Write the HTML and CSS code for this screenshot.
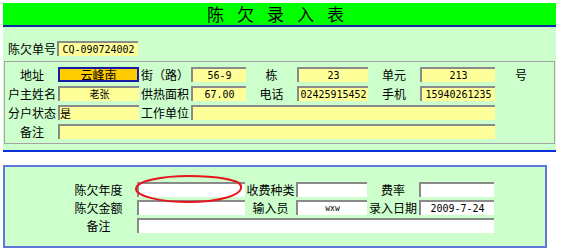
FILE: index.html
```html
<!DOCTYPE html>
<html>
<head>
    <meta charset="utf-8">
    <title>陈欠录入表</title>
    <link rel="stylesheet" href="styles.css">
</head>
<body>
    <div class="sheet">
        <div class="title">陈欠录入表</div>

        <div class="bill">
            <span class="bill-label">陈欠单号</span>
            <div class="field bill-no">CQ-090724002</div>
        </div>

        <div class="info">
            <span class="lbl">地址</span>
            <div class="field hot">云峰南</div>
            <span class="lbl">街（路）</span>
            <div class="field">56-9</div>
            <span class="lbl">栋</span>
            <div class="field">23</div>
            <span class="lbl">单元</span>
            <div class="field">213</div>
            <span class="lbl">号</span>

            <span class="lbl first">户主姓名</span>
            <div class="field">老张</div>
            <span class="lbl">供热面积</span>
            <div class="field">67.00</div>
            <span class="lbl">电话</span>
            <div class="field">02425915452</div>
            <span class="lbl">手机</span>
            <div class="field">15940261235</div>

            <span class="lbl first">分户状态</span>
            <div class="field left">是</div>
            <span class="lbl">工作单位</span>
            <div class="field span5"></div>

            <span class="lbl first">备注</span>
            <div class="field span7"></div>
        </div>
    </div>

    <div class="arrears">
        <div class="arrears-grid">
            <span class="lbl">陈欠年度</span>
            <div class="field white"></div>
            <span class="lbl">收费种类</span>
            <div class="field white"></div>
            <span class="lbl">费率</span>
            <div class="field white"></div>

            <span class="lbl">陈欠金额</span>
            <div class="field white"></div>
            <span class="lbl">输入员</span>
            <div class="field white small">wxw</div>
            <span class="lbl">录入日期</span>
            <div class="field white">2009-7-24</div>

            <span class="lbl">备注</span>
            <div class="field white span5"></div>
        </div>

        <!-- red circle drawn over the 陈欠年度 box -->
        <svg class="mark" width="112" height="30" viewBox="0 0 112 30">
            <path d="M107 12 C109 22 82 28 55 28 C26 28 2 22 2 15 C2 7 28 2 55 2 C82 2 107 6 107 12 L104 8"
                  fill="none" stroke="#e8141b" stroke-width="2"/>
        </svg>
    </div>
</body>
</html>
```

FILE: styles.css
```css
body {
    margin: 0;
    background-color: white;
    color: black;
    font-family: "Noto Sans CJK SC", "DejaVu Sans", sans-serif;
    font-size: 12px;
}
.sheet {
    margin: 3px 0 0 3px;
    width: 553px;
    background-color: #ccffcc;
    border-bottom: 2px solid #0a2fd8;
    padding-bottom: 6px;
}
.title {
    height: 22px;
    line-height: 22px;
    background-color: #00ff00;
    border-bottom: 2px solid #0b2a9c;
    text-align: center;
    font-size: 17px;
    letter-spacing: 13px;
    padding-left: 5px;
}
.bill {
    display: flex;
    align-items: center;
    margin-top: 14px;
    padding-left: 5px;
}
.bill-label {
    width: 49px;
    line-height: 15px;
}
.bill-no {
    width: 81px;
}
.info {
    display: grid;
    grid-template-columns: 52px 81px 52px 55px 51px 71px 52px 75px 52px;
    grid-auto-rows: 15px;
    row-gap: 4px;
    margin: 5px 1px 0 1px;
    padding: 5px 0 4px 1px;
    border: 1px solid #a3a3a3;
}
.lbl {
    text-align: center;
    line-height: 15px;
    white-space: nowrap;
}
.first {
    grid-column: 1;
}
.field {
    box-sizing: border-box;
    height: 15px;
    line-height: 13px;
    background-color: #ffff99;
    border-top: 2px solid #8a8a8a;
    border-left: 2px solid #8a8a8a;
    text-align: center;
    font-family: "DejaVu Sans Mono", "Noto Sans CJK SC", monospace;
    font-size: 10px;
    white-space: nowrap;
    overflow: hidden;
}
.hot {
    background-color: #ffcc00;
    border: 2px solid #1a1aa8;
    line-height: 11px;
    font-family: "Noto Sans CJK SC", sans-serif;
    font-size: 12px;
}
.left {
    text-align: left;
    font-family: "Noto Sans CJK SC", sans-serif;
    font-size: 11px;
    line-height: 12px;
    overflow: visible;
}
.span5 {
    grid-column: span 5;
}
.span7 {
    grid-column: span 7;
}
.arrears {
    position: relative;
    margin: 13px 0 0 3px;
    width: 540px;
    height: 79px;
    background-color: #ccffcc;
    border: 2px solid #5f77d8;
}
.arrears-grid {
    display: grid;
    grid-template-columns: 77px 108px 51px 71px 52px 75px;
    grid-auto-rows: 15px;
    row-gap: 3px;
    padding: 15px 0 0 55px;
}
.white {
    background-color: white;
}
.small {
    font-size: 8px;
}
.mark {
    position: absolute;
    left: 129px;
    top: 7px;
}
```
